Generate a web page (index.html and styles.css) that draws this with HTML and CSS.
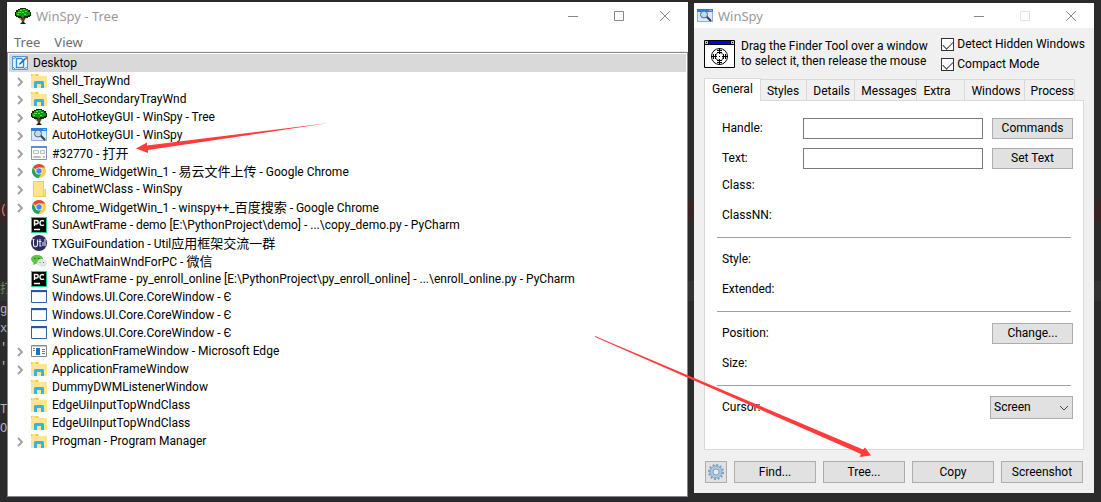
FILE: index.html
```html
<!DOCTYPE html>
<html lang="en">
<head>
<meta charset="utf-8">
<title>WinSpy</title>
<link rel="stylesheet" href="styles.css">
</head>
<body>
<svg class="defs" aria-hidden="true">
  <symbol id="i-chev" viewBox="0 0 8 10"><path d="M2 1l4 4-4 4" fill="none" stroke="#a0a0a0" stroke-width="1.8"/></symbol>
  <symbol id="i-folder" viewBox="0 0 16 16"><path d="M0 1h7l1 2h8v12H0z" fill="#ffe594"/><path d="M0 1h7l1 2H0z" fill="#ffc933"/><path d="M1 2h4" stroke="#fff3c0"/><path d="M3 15V9l1-1h8l1 1v6h-3v-4H6v4z" fill="#35b2e8"/></symbol>
  <symbol id="i-tree" viewBox="0 0 16 16"><path d="M5 0h6v1h2v1h2v2h1v4h-1v1h-2v1h-3l-1 4 2 2H5l2-2-1-4H3V9H1V8H0V4h1V2h2V1h2z" fill="#062b06"/><path d="M5 1h6v1h2v2h2v3h-2v1H9v1H6V8H2V7H1V4h2V2h2z" fill="#159515"/><path d="M5 2h2v1H5zM8 1h2v1H8zM3 4h3v1H3zM7 4h2v1H7zM10 3h2v1h-2zM2 6h2v1H2zM9 6h2v1H9z" fill="#4bea3a"/><path d="M7 9h2v5H7zM4 10h1l2 2H6zM11 9h1l-2 3z" fill="#7c3513"/></symbol>
  <symbol id="i-spy" viewBox="0 0 16 16"><path d="M0 1h16v13H0z" fill="#8fb0d8"/><path d="M1 4h14v9H1z" fill="#dce8f4"/><path d="M0 1h16v3H0z" fill="#2b7fd8"/><path d="M12 2h3v1h-3z" fill="#f0a080"/><path d="M9 8l5 5" stroke="#354050" stroke-width="2"/><circle cx="7" cy="6.500" r="3.500" fill="#b9dcf7" stroke="#59697c"/></symbol>
  <symbol id="i-dialog" viewBox="0 0 16 16"><path d="M.5 1.500h15v13H.5z" fill="#fff" stroke="#7b96bd"/><path d="M0 1h16v2H0z" fill="#5f8fcf"/><path d="M2.500 5.500h5v3h-5zM9.500 5.500h4v3h-4zM2.500 11.500h7v1h-7zM12 11.500h1.500v1H12z" fill="#f4f4f4" stroke="#b9bdc3"/></symbol>
  <symbol id="i-chrome" viewBox="0 0 16 16"><circle cx="8" cy="8" r="7" fill="#ffcd42"/><path d="M8 8L1.900 4.500A7 7 0 0 1 14.100 4.500H8z" fill="#df4a3e"/><path d="M1.900 4.500A7 7 0 0 0 7.500 15L11 9.700 5 9.700z" fill="#1da362"/><circle cx="8" cy="8" r="3.600" fill="#f2f2f2"/><circle cx="8" cy="8" r="2.700" fill="#4587f3"/></symbol>
  <symbol id="i-plain" viewBox="0 0 16 16"><path d="M2 0h11v8h2v8H2z" fill="#ffe48e"/><path d="M2.500.500h10v8h2v7h-12zM12.500 8v7" fill="none" stroke="#eccd70"/></symbol>
  <symbol id="i-pc" viewBox="0 0 16 16"><path d="M0 0h16v16H0z" fill="#20d08a"/><path d="M1 1h14v14H1z" fill="#050505"/><path d="M3.500 9V3.500h2a1.500 1.500 0 0 1 0 3.500h-2M13 4.200c-2.800-1.700-4.300.4-4 2.100.3 2.200 2.200 2.700 4 1.400M3 12.500h6" fill="none" stroke="#fff" stroke-width="1.400"/></symbol>
  <symbol id="i-util" viewBox="0 0 16 16"><circle cx="8" cy="8" r="8" fill="#2c2d5c"/><path d="M1.500 4.500h2M2.500 4.500v5c0 3 4 3 4 0v-5M9 4v7h1.500M7.500 6.500h3M12 7v4M14 4v7" fill="none" stroke="#e8e8f4" stroke-width="1.100"/></symbol>
  <symbol id="i-wechat" viewBox="0 0 16 16"><path d="M6 2c8 0 8 8.500 0 8.500L2 12l.6-2.300C-2 7 0 2 6 2z" fill="#5bc544"/><path d="M11 6c6.500.2 6 5.500 3.400 7l.3 1.600-2-1C4 14.500 4.500 6 11 6z" fill="#e4e6e4"/><path d="M3 5h1.500v1H3zM7 5h1.500v1H7z" fill="#246b1d"/><path d="M8.500 9h1v1h-1zM12 9h1v1h-1z" fill="#777"/></symbol>
  <symbol id="i-win" viewBox="0 0 16 16"><path d="M.5 1.500h15v12H.5z" fill="#fff" stroke="#2f62aa"/><path d="M0 1h16v2H0z" fill="#2458a6"/><path d="M1 3.500h14" stroke="#dce9f6"/></symbol>
  <symbol id="i-app" viewBox="0 0 16 16"><path d="M.5 2.500h15v11H.5z" fill="#fff" stroke="#898989"/><path d="M1 3h14v1H1z" fill="#c9c9c9"/><path d="M5 5h4v7H5z" fill="#0878d7"/><path d="M11 6.500h3M11 8.500h3M11 10.500h3M2 5.500h2M2 7.500h2" stroke="#777"/></symbol>
  <symbol id="i-desktop" viewBox="0 0 16 16"><path d="M.5 1.500h15v13H.5z" fill="#e7f3fc" stroke="#5299d4"/><path d="M1 4l3-2M1 12l2 2M12 14l3-2" stroke="#5299d4"/><path d="M4.500 3.500h5l2 2v7h-7z" fill="#fff" stroke="#2f91dc" stroke-width="1.400"/><path d="M7 10l.5-2L13 3l1 1-5 5z" fill="#176dac"/><path d="M13 3l1.500-1.200L16 3.500l-2 1z" fill="#e25b35"/></symbol>
  <symbol id="i-min" viewBox="0 0 12 12"><path d="M1 6.500h10" fill="none" stroke="currentColor"/></symbol>
  <symbol id="i-max" viewBox="0 0 12 12"><path d="M1.500 1.500h9v9h-9z" fill="none" stroke="currentColor"/></symbol>
  <symbol id="i-close" viewBox="0 0 12 12"><path d="M1 1l10 10M11 1L1 11" fill="none" stroke="currentColor"/></symbol>
</svg>
<main class="desktop">
  <div class="editor" aria-hidden="true">
    <div class="stripe stripe-red">(</div>
    <div class="stripe stripe-line">打</div>
    <div class="code">g<br>x<br>'<br>'</div>
    <div class="code code-end">T<br>OP</div>
  </div>

  <section class="window tree-window">
    <header class="titlebar">
      <svg class="icon"><use href="#i-tree"/></svg><h1 class="title">WinSpy - Tree</h1>
      <button class="cap" aria-label="Minimize"><svg><use href="#i-min"/></svg></button>
      <button class="cap" aria-label="Maximize"><svg><use href="#i-max"/></svg></button>
      <button class="cap" aria-label="Close"><svg><use href="#i-close"/></svg></button>
    </header>
    <nav class="menubar"><button>Tree</button><button>View</button></nav>
    <div class="tree">
      <div class="root"><svg class="icon"><use href="#i-desktop"/></svg>Desktop</div>
      <ul class="nodes">
        <li><svg class="chev"><use href="#i-chev"/></svg><svg class="icon"><use href="#i-folder"/></svg>Shell_TrayWnd</li>
        <li><svg class="chev"><use href="#i-chev"/></svg><svg class="icon"><use href="#i-folder"/></svg>Shell_SecondaryTrayWnd</li>
        <li><svg class="chev"><use href="#i-chev"/></svg><svg class="icon"><use href="#i-tree"/></svg>AutoHotkeyGUI - WinSpy - Tree</li>
        <li><svg class="chev"><use href="#i-chev"/></svg><svg class="icon"><use href="#i-spy"/></svg>AutoHotkeyGUI - WinSpy</li>
        <li><svg class="chev"><use href="#i-chev"/></svg><svg class="icon"><use href="#i-dialog"/></svg><span>#32770 - <span class="zh" lang="zh">打开</span></span></li>
        <li><svg class="chev"><use href="#i-chev"/></svg><svg class="icon"><use href="#i-chrome"/></svg><span>Chrome_WidgetWin_1 - <span class="zh" lang="zh">易云文件上传</span> - Google Chrome</span></li>
        <li><svg class="chev"><use href="#i-chev"/></svg><svg class="icon"><use href="#i-plain"/></svg>CabinetWClass - WinSpy</li>
        <li><svg class="chev"><use href="#i-chev"/></svg><svg class="icon"><use href="#i-chrome"/></svg><span>Chrome_WidgetWin_1 - winspy++_<span class="zh" lang="zh">百度搜索</span> - Google Chrome</span></li>
        <li class="leaf"><svg class="icon"><use href="#i-pc"/></svg>SunAwtFrame - demo [E:\PythonProject\demo] - ...\copy_demo.py - PyCharm</li>
        <li class="leaf"><svg class="icon"><use href="#i-util"/></svg><span>TXGuiFoundation - Util<span class="zh" lang="zh">应用框架交流一群</span></span></li>
        <li class="leaf"><svg class="icon"><use href="#i-wechat"/></svg><span>WeChatMainWndForPC - <span class="zh" lang="zh">微信</span></span></li>
        <li class="leaf"><svg class="icon"><use href="#i-pc"/></svg>SunAwtFrame - py_enroll_online [E:\PythonProject\py_enroll_online] - ...\enroll_online.py - PyCharm</li>
        <li class="leaf"><svg class="icon"><use href="#i-win"/></svg>Windows.UI.Core.CoreWindow - Є</li>
        <li class="leaf"><svg class="icon"><use href="#i-win"/></svg>Windows.UI.Core.CoreWindow - Є</li>
        <li class="leaf"><svg class="icon"><use href="#i-win"/></svg>Windows.UI.Core.CoreWindow - Є</li>
        <li><svg class="chev"><use href="#i-chev"/></svg><svg class="icon"><use href="#i-app"/></svg>ApplicationFrameWindow - Microsoft Edge</li>
        <li><svg class="chev"><use href="#i-chev"/></svg><svg class="icon"><use href="#i-folder"/></svg>ApplicationFrameWindow</li>
        <li class="leaf"><svg class="icon"><use href="#i-folder"/></svg>DummyDWMListenerWindow</li>
        <li class="leaf"><svg class="icon"><use href="#i-folder"/></svg>EdgeUiInputTopWndClass</li>
        <li class="leaf"><svg class="icon"><use href="#i-folder"/></svg>EdgeUiInputTopWndClass</li>
        <li><svg class="chev"><use href="#i-chev"/></svg><svg class="icon"><use href="#i-folder"/></svg>Progman - Program Manager</li>
      </ul>
    </div>
  </section>

  <section class="window spy-window">
    <header class="titlebar">
      <svg class="icon"><use href="#i-spy"/></svg><h1 class="title">WinSpy</h1>
      <button class="cap" aria-label="Minimize"><svg><use href="#i-min"/></svg></button>
      <button class="cap" aria-label="Maximize" disabled><svg><use href="#i-max"/></svg></button>
      <button class="cap" aria-label="Close"><svg><use href="#i-close"/></svg></button>
    </header>
    <div class="finder">
      <svg class="finder-icon" viewBox="0 0 31 28" aria-hidden="true"><path d="M.5.500h30v27H.5z" fill="#fff" stroke="#000"/><path d="M1 1h29v3H1z" fill="#00f"/><path d="M0 4.500h31" stroke="#000"/><path d="M1 1h3v3H1zM27 1h3v3h-3z" fill="#c0c0c0"/><path d="M4.500 1v3M26.500 1v3" stroke="#000"/><path d="M2 2h1v1H2zM28 2h1v1h-1z"/><g fill="none" stroke="#000"><circle cx="15.500" cy="16.500" r="8"/><circle cx="15.500" cy="16.500" r="4" stroke-dasharray="4 2"/><path d="M7 16.500h6M18 16.500h6M15.500 8v6M15.500 19v6M9.500 14v5M11.500 14v5M19.500 14v5M21.500 14v5M13 10.500h5M13 12.500h5M13 20.500h5M13 22.500h5"/></g><path d="M15 16h1v1h-1z"/></svg>
      <p class="hint">Drag the Finder Tool over a window<br>to select it, then release the mouse</p>
      <div class="checks">
        <label><input type="checkbox" checked>Detect Hidden Windows</label>
        <label><input type="checkbox" checked>Compact Mode</label>
      </div>
    </div>
    <div class="tabs" role="tablist">
      <button class="tab active" role="tab" aria-selected="true">General</button>
      <button class="tab" role="tab">Styles</button>
      <button class="tab" role="tab">Details</button>
      <button class="tab" role="tab">Messages</button>
      <button class="tab" role="tab">Extra</button>
      <button class="tab" role="tab">Windows</button>
      <button class="tab" role="tab">Process</button>
    </div>
    <form class="panel">
      <div class="group fields">
        <div class="row"><label for="handle">Handle:</label><input id="handle" type="text"><button type="button" class="btn">Commands</button></div>
        <div class="row"><label for="text">Text:</label><input id="text" type="text"><button type="button" class="btn">Set Text</button></div>
      </div>
      <div class="group">
        <div class="row">Class:</div>
        <div class="row">ClassNN:</div>
      </div>
      <hr>
      <div class="group">
        <div class="row">Style:</div>
        <div class="row">Extended:</div>
      </div>
      <hr>
      <div class="group">
        <div class="row"><span>Position:</span><button type="button" class="btn last">Change...</button></div>
        <div class="row">Size:</div>
      </div>
      <hr>
      <div class="row"><label for="cursor">Cursor:</label>
        <span class="select last"><select id="cursor"><option>Screen</option></select><svg viewBox="0 0 10 6" aria-hidden="true"><path d="M1 1l4 4 4-4" fill="none" stroke="#444"/></svg></span>
      </div>
    </form>
    <footer class="actions">
      <button class="btn gear" aria-label="Settings"><svg viewBox="0 0 16 16"><circle cx="8" cy="8" r="7" fill="none" stroke="#7d9dbd" stroke-width="2" stroke-dasharray="2 1.665"/><circle cx="8" cy="8" r="4.500" fill="none" stroke="#a9c8e6" stroke-width="3.500"/><circle cx="8" cy="8" r="6" fill="none" stroke="#7599bf" stroke-width=".7"/><circle cx="8" cy="8" r="3" fill="#e6edf4" stroke="#6d8caf" stroke-width=".8"/></svg></button>
      <button class="btn">Find...</button>
      <button class="btn">Tree...</button>
      <button class="btn">Copy</button>
      <button class="btn">Screenshot</button>
    </footer>
  </section>

  <svg class="arrows" width="1101" height="502" aria-hidden="true">
    <path d="M136 148.500L147 142.500V145.500L329 123 148 150V153z"/>
    <path d="M871 455.500L859.500 457 861 454 595 337 595 336 863 449.500 865 447.500z"/>
  </svg>
</main>
</body>
</html>
```

FILE: styles.css
```css
* { box-sizing: border-box; }

body {
  margin: 0;
  background: #2b2b2b;
  color: #000;
  font: 12px/18px Roboto, "Noto Sans CJK SC", sans-serif;
}

button, input, select { font: inherit; color: inherit; margin: 0; }
button { padding: 0; border: 0; background: none; }

.defs { position: absolute; width: 0; height: 0; }

.desktop {
  position: relative;
  display: flex;
  align-items: stretch;
  gap: 6px;
  min-height: 100vh;
  padding: 2px 7px 5px;
}

.editor {
  position: absolute;
  inset: 0;
  padding-top: 201px;
  overflow: hidden;
  color: #a9b7c6;
  font: 12px/19px "Liberation Mono", "Noto Sans CJK SC", monospace;
}
.stripe { height: 20px; }
.stripe-red { background: #3a2323; color: #cc8a8a; }
.stripe-line { margin-top: 60px; background: #323232; color: #6a8759; }
.code-end { margin-top: 24px; }

.window { position: relative; display: flex; flex-direction: column; min-width: 0; }
.tree-window { flex: 681 1 0; background: #fff; }
.spy-window {
  flex: 400 1 0;
  margin: 1px 0 4px;
  background: #f0f0f0;
}

.titlebar { display: flex; align-items: center; height: 28px; padding-left: 8px; background: #fff; }
.title { flex: 1; margin: 0 0 0 5px; color: #999; font: 13px/18px "Noto Sans", sans-serif; }
.cap { width: 46px; height: 26px; color: #888; }
.cap svg { display: block; width: 12px; height: 12px; margin: auto; }
.cap:disabled { color: #e4e4e4; }
.icon { flex: none; width: 16px; height: 16px; }

.menubar { display: flex; gap: 14px; height: 22px; padding: 2px 7px 0; color: #6d6d6d; border-bottom: 1px solid #f0f0f0; }
.menubar button { font: 13px/18px "Noto Sans", sans-serif; }

.tree { flex: 1; padding: 1px; border: 1px solid #828790; overflow: hidden; }
.root { display: flex; align-items: center; gap: 5px; padding-left: 3px; background: #d9d9d9; }
.nodes { margin: 0; padding: 0; list-style: none; }
.nodes li { display: flex; align-items: center; gap: 5px; height: 18px; padding-left: 7px; white-space: nowrap; }
.nodes .leaf { padding-left: 22px; }
.chev { flex: none; width: 8px; height: 10px; margin: 2px 2px 0 0; }
.zh { font: 13px/18px "Noto Sans CJK SC", sans-serif; }

.spy-window .titlebar { height: 25px; padding-left: 3px; }

.finder { display: flex; gap: 6px; height: 50px; padding: 9px 9px 0 10px; line-height: 15px; white-space: nowrap; }
.finder-icon { flex: none; width: 31px; height: 28px; margin-top: 3px; }
.hint { flex: 1; margin: 2px 0 0; }
.checks { display: flex; flex-direction: column; gap: 5px; }
.checks label { display: flex; align-items: center; gap: 3px; }
.checks input {
  appearance: none;
  width: 13px;
  height: 13px;
  border: 1px solid #333;
  background: #fff;
}
.checks input::after {
  content: "";
  display: block;
  width: 9px;
  height: 5px;
  margin: 2px 1px;
  border: solid #444;
  border-width: 0 0 1px 1px;
  transform: rotate(-45deg);
}

.tabs { display: flex; align-items: flex-end; padding: 0 19px 0 10px; }
.tab { flex: 48 1 0; height: 21px; padding: 1px 0 0 6px; border: solid #d9d9d9; border-width: 1px 1px 0 0; text-align: left; white-space: nowrap; }
.tab:nth-child(4) { flex-grow: 63; }
.tab:nth-child(6) { flex-grow: 61; }
.tab:nth-child(7) { flex-grow: 50; }
.tab:nth-child(2) { flex-grow: 46; }
.tab.active { position: relative; flex-grow: 56; height: 23px; margin-bottom: -1px; padding: 0 0 2px 7px; border-left-width: 1px; background: #fff; }

.panel {
  flex: 1;
  margin: 0 10px;
  padding: 15px 10px 0 17px;
  background: #fff;
  border: 1px solid #d9d9d9;
}
.group { display: flex; flex-direction: column; gap: 6px; }
.fields { margin-bottom: 3px; }
.row { display: flex; align-items: center; gap: 9px; height: 24px; }
.row label { flex: 0 0 72px; }
.row input { flex: 1; min-width: 0; height: 21px; padding: 1px 4px; border: 1px solid #7a7a7a; background: #fff; }
.row .btn { flex: none; width: 81px; }
.row .last { margin-left: auto; }
.panel hr { height: 1px; margin: 10px 2px 9px -5px; border: 0; background: #a0a0a0; }

.btn { height: 21px; border: 1px solid #adadad; background: #e1e1e1; white-space: nowrap; }

.select { position: relative; flex: none; width: 83px; }
.select select { display: block; appearance: none; width: 100%; height: 23px; padding: 0 3px; border: 1px solid #adadad; border-radius: 0; background: #e1e1e1; }
.select svg { position: absolute; right: 4px; top: 9px; width: 10px; height: 6px; pointer-events: none; }

.actions { display: flex; gap: 7px; padding: 11px 11px 10px; }
.actions .btn { flex: 1; height: 22px; }
.actions .gear { flex: 0 0 22px; }
.gear svg { display: block; width: 16px; height: 16px; margin: auto; }

.arrows { position: absolute; left: 0; top: 0; fill: #ff3b3b; pointer-events: none; }
```
